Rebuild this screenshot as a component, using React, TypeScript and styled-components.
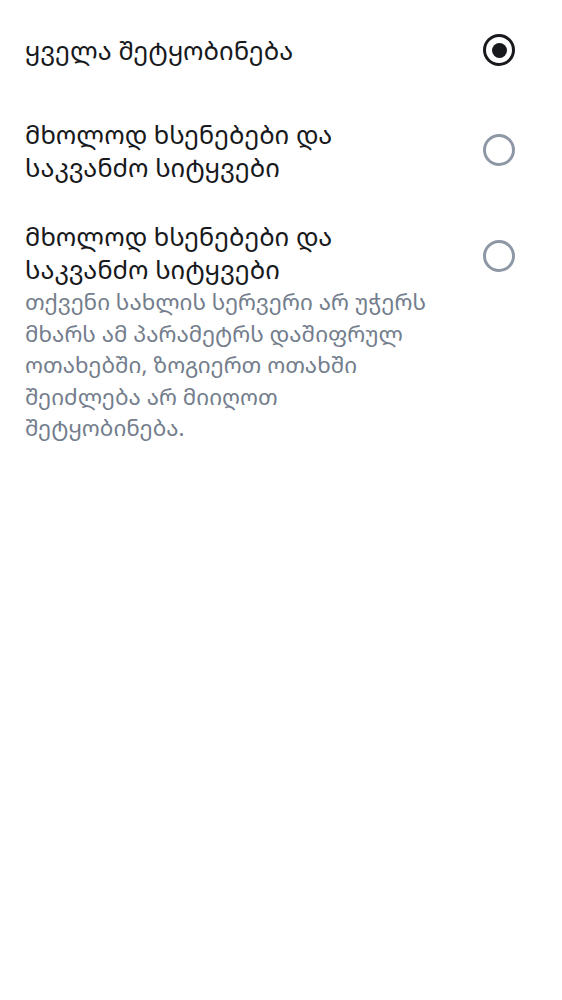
import React, { useState } from "react";
import styled, { createGlobalStyle } from "styled-components";

const Global = createGlobalStyle`
  html, body { margin: 0; padding: 0; background: #ffffff; }
  body { font-family: "Noto Sans Georgian", "DejaVu Sans", sans-serif; }
`;

const List = styled.div`
  display: flex;
  flex-direction: column;
  padding: 0 47px 0 25px;
`;

const Row = styled.label`
  display: grid;
  grid-template-columns: minmax(0, 410px) 32px;
  justify-content: space-between;
  column-gap: 16px;
  padding: 18px 0;
  cursor: pointer;
`;

const Title = styled.div<{ $min: number }>`
  grid-column: 1;
  grid-row: 1;
  min-height: ${(p) => p.$min}px;
  display: flex;
  align-items: center;
  font-size: 25.5px;
  line-height: 33px;
  color: #17191c;
`;

const Desc = styled.div`
  grid-column: 1;
  grid-row: 2;
  font-size: 22.4px;
  line-height: 31.5px;
  color: #737d8c;
`;

const Radio = styled.span<{ $checked: boolean; $shift: number }>`
  grid-column: 2;
  grid-row: 1;
  align-self: center;
  box-sizing: border-box;
  width: 32px;
  height: 32px;
  margin-top: ${(p) => p.$shift}px;
  border-radius: 50%;
  border: 3px solid ${(p) => (p.$checked ? "#17191c" : "#8d97a5")};
  display: flex;
  align-items: center;
  justify-content: center;
  &::after {
    content: "";
    display: ${(p) => (p.$checked ? "block" : "none")};
    width: 15px;
    height: 15px;
    border-radius: 50%;
    background: #17191c;
  }
`;

type Option = { title: string; desc?: string; min: number; shift: number };

const options: Option[] = [
  { title: "ყველა შეტყობინება", min: 64, shift: 0 },
  { title: "მხოლოდ ხსენებები და საკვანძო სიტყვები", min: 0, shift: -3 },
  {
    title: "მხოლოდ ხსენებები და საკვანძო სიტყვები",
    desc: "თქვენი სახლის სერვერი არ უჭერს მხარს ამ პარამეტრს დაშიფრულ ოთახებში, ზოგიერთ ოთახში შეიძლება არ მიიღოთ შეტყობინება.",
    min: 0,
    shift: 5,
  },
];

export default function App() {
  const [sel, setSel] = useState(0);
  return (
    <>
      <Global />
      <List>
        {options.map((o, i) => (
          <Row key={i} onClick={() => setSel(i)}>
            <Title $min={o.min}>{o.title}</Title>
            <Radio $checked={sel === i} $shift={o.shift} />
            {o.desc && <Desc>{o.desc}</Desc>}
          </Row>
        ))}
      </List>
    </>
  );
}
